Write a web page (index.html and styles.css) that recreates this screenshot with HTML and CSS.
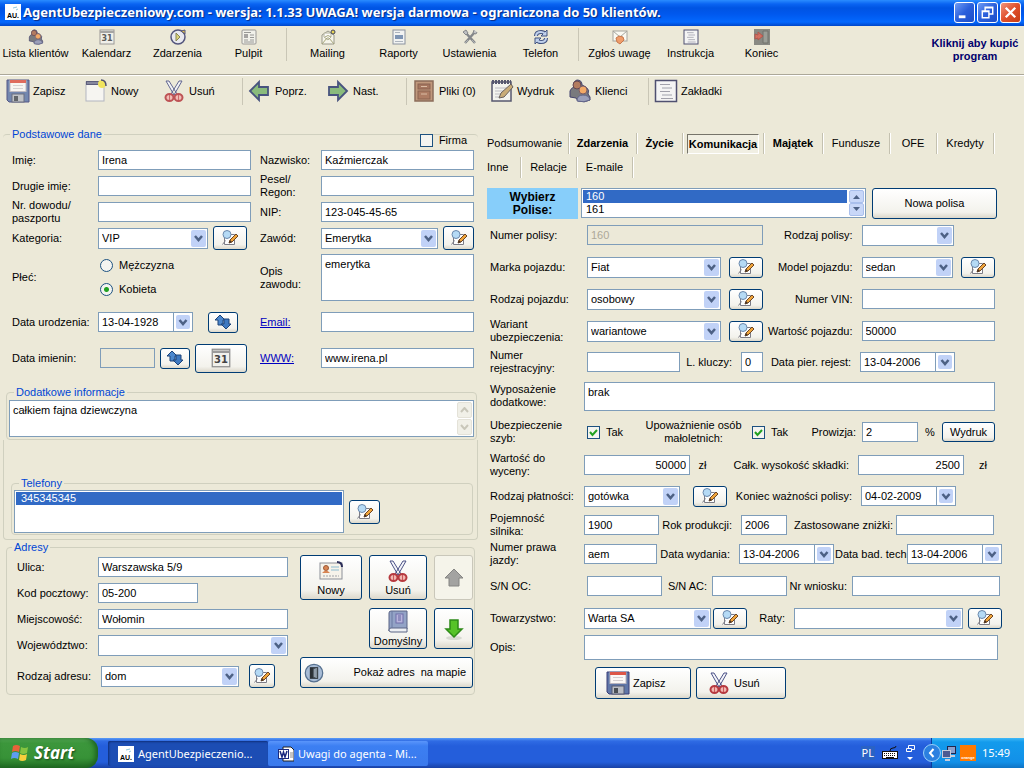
FILE: index.html
```
<!DOCTYPE html>
<html lang="pl">
<head>
    <meta charset="UTF-8">
    <meta name="viewport" content="width=device-width, initial-scale=1.0">
    <title>AgentUbezpieczeniowy.com</title>
    <link rel="stylesheet" href="styles.css">
</head>
<body>

    <!-- icon set -->
    <svg class="sprite" aria-hidden="true">
        <symbol id="i-people" viewBox="0 0 24 24">
            <path d="M2 18V12q1-3 4-4Q5 2 9 1q5 0 5 5l4 2q4 3 2 7l2 3v3q-5 3-12 1l-2-3z" fill="#66676f" stroke="#27275c"/>
            <circle cx="9" cy="6" r="4" fill="#a9684c" stroke="#4b2b3c"/>
            <circle cx="15" cy="11" r="4" fill="#f5a054" stroke="#6b4550"/>
            <path d="M9 22q0-6 6-6t7 5q-6 3-13 1z" fill="#8d93b4" stroke="#4a4e7c"/>
        </symbol>
        <symbol id="i-calendar" viewBox="0 0 16 16">
            <rect x="1" y="1" width="14" height="14" fill="#f1f1ec" stroke="#8c8c8c"/>
            <path d="M1 3h14" stroke="#9a9a9a" stroke-width="2"/>
            <text x="8" y="12" text-anchor="middle" class="cal-num">31</text>
        </symbol>
        <symbol id="i-clock" viewBox="0 0 16 16">
            <circle cx="8" cy="8" r="7" fill="#e9eaf4" stroke="#3a3d6e" stroke-width="1.5"/>
            <path d="M6 4l4 4-4 4z" fill="#d8cf6a" stroke="#77763c"/>
            <path d="M11 2l4-1v4z" fill="#e0b932" stroke="#3a3d6e"/>
        </symbol>
        <symbol id="i-news" viewBox="0 0 16 16">
            <rect x="1" y="1" width="14" height="14" rx="1" fill="#f3f3ee" stroke="#8b8b8b"/>
            <rect x="3" y="5" width="4" height="4" fill="#999"/>
            <path d="M3 3.500h7M9 6h4M9 8.500h4M3 11h4M9 11h4M3 13h10" stroke="#8a8a8a"/>
        </symbol>
        <symbol id="i-mail" viewBox="0 0 16 16">
            <path d="M2 6l6-4 6 4v9H2z" fill="#f8f8ee" stroke="#8a8a7c"/>
            <path d="M4 4h7v4l-3 3-4-3z" fill="#fff" stroke="#a8a890"/>
            <path d="M2 15l5-6h2l5 6M5 8q3-3 6 0" fill="none" stroke="#9b9b6a"/>
            <circle cx="13" cy="3" r="2" fill="#e7d13c" stroke="#222648"/>
        </symbol>
        <symbol id="i-report" viewBox="0 0 16 16">
            <rect x="2" y="1" width="12" height="14" fill="#f4f5f7" stroke="#7b8496"/>
            <path d="M4 3.500h5M4 12.500h8" stroke="#a3abba"/>
            <rect x="4" y="6" width="8" height="4" fill="#6c87ae"/>
        </symbol>
        <symbol id="i-tools" viewBox="0 0 16 16">
            <path d="M3 3l10 11M13 3L3 14" stroke="#73777d" stroke-width="2.500"/>
            <path d="M1 3l3-2 2 3-2 2zM12 1l-1 3 3 1 1-2" fill="#b8bbc0" stroke="#73777d"/>
            <path d="M3 14l3-3M13 14l-3-3" stroke="#a6a9ae" stroke-width="1"/>
        </symbol>
        <symbol id="i-sync" viewBox="0 0 16 16">
            <path d="M3 7q0-4 5-4 3 0 4 2M13 9q0 4-5 4-3 0-4-2" fill="none" stroke="#23376f" stroke-width="4"/>
            <path d="M14 1v6H8zM2 15V9h6z" fill="#b9cdf0" stroke="#23376f"/>
            <path d="M3 7q0-4 5-4 3 0 4 2M13 9q0 4-5 4-3 0-4-2" fill="none" stroke="#b9cdf0" stroke-width="2"/>
        </symbol>
        <symbol id="i-feedback" viewBox="0 0 16 16">
            <rect x="1" y="2" width="14" height="10" fill="#fdfcf6" stroke="#9a9a94"/>
            <path d="M1 2l7 6 7-6" fill="none" stroke="#9a9a94"/>
            <path d="M4 9l3-2 4 1 1 3-4 4-3-2z" fill="#f09058" stroke="#c06534"/>
        </symbol>
        <symbol id="i-doc" viewBox="0 0 24 24">
            <rect x="1.500" y="1.500" width="21" height="21" fill="#f6f6fa" stroke="#34365f" stroke-width="1.500"/>
            <path d="M6 5.500h10M8 9h10M6 12.500h10M8 16h10M7 19.500h12" stroke="#9495a4" stroke-width="1.200"/>
        </symbol>
        <symbol id="i-exit" viewBox="0 0 16 16">
            <rect width="16" height="16" fill="#777975"/>
            <path d="M9 2h5v12H9z" fill="#8e918c" stroke="#5c5e5b"/>
            <path d="M1 5l3 1V3l5 4-5 4V9L1 10z" fill="#cf5a4c" stroke="#a63f36"/>
        </symbol>
        <symbol id="i-floppy" viewBox="0 0 24 24">
            <path d="M1 1h22v22H3l-2-2z" fill="#5f76a8" stroke="#3a3f78"/>
            <rect x="4" y="1.500" width="16" height="11" fill="#fbf8f6" stroke="#b9b4be"/>
            <rect x="4" y="1" width="16" height="3" fill="#dd5648"/>
            <path d="M7 6.500h10M7 9.500h10" stroke="#d3ced0"/>
            <rect x="6" y="15" width="12" height="8" fill="#b9bcc4" stroke="#545870"/>
            <rect x="8" y="17" width="4" height="5" fill="#4a4f56"/>
        </symbol>
        <symbol id="i-new" viewBox="0 0 24 24">
            <rect x="2" y="3" width="18" height="19" fill="#f8f8f6" stroke="#a9adbd"/>
            <rect x="2" y="2" width="18" height="4" fill="#46486c"/>
            <path d="M3 4h16" stroke="#a3a6bd"/>
            <circle cx="18" cy="5" r="4" fill="#f3e44a"/>
            <path d="M17 1q5 0 5 6" fill="none" stroke="#34365f" stroke-width="1.500"/>
        </symbol>
        <symbol id="i-scissors" viewBox="0 0 24 24">
            <path d="M4 2l3 0 8 13-3 1zM20 2l-3 0L9 15l3 1z" fill="#f4f5fa" stroke="#4b5186"/>
            <ellipse cx="7.500" cy="18.500" rx="4" ry="3.500" fill="#f2b6b0" stroke="#b6393f" stroke-width="2"/>
            <ellipse cx="16.500" cy="18.500" rx="4" ry="3.500" fill="#f2b6b0" stroke="#b6393f" stroke-width="2"/>
            <path d="M7.500 16v5M16.500 16v5" stroke="#c9565a"/>
        </symbol>
        <symbol id="i-left" viewBox="0 0 24 24">
            <path d="M2 12l9-9v5h9v8h-9v5z" fill="#79b46c" stroke="#2c3a70" stroke-width="1.800"/>
        </symbol>
        <symbol id="i-right" viewBox="0 0 24 24">
            <path d="M21 12l-9-9v5H3v8h9v5z" fill="#79b46c" stroke="#2c3a70" stroke-width="1.800"/>
        </symbol>
        <symbol id="i-files" viewBox="0 0 24 24">
            <rect x="3" y="2" width="18" height="20" fill="#b98a6c" stroke="#7b5744" stroke-width="1.500"/>
            <rect x="6" y="5" width="12" height="5" fill="#99624b" stroke="#7b4c3a"/>
            <rect x="6" y="12" width="12" height="8" fill="#a46b50" stroke="#7b4c3a"/>
            <path d="M9 7.500h6M9 15h6" stroke="#d9b59b"/>
        </symbol>
        <symbol id="i-notepad" viewBox="0 0 24 24">
            <rect x="2" y="3" width="19" height="19" fill="#f5f5f3" stroke="#3c3e5c" stroke-width="1.500"/>
            <path d="M2 3h19" stroke="#3c3e5c" stroke-width="4" stroke-dasharray="2 1"/>
            <path d="M5 9h12M5 12h9M5 15h6M5 18h5" stroke="#b4b5bd"/>
            <path d="M9 19l2-5 10-9 2 3-9 10z" fill="#c3a268" stroke="#524a48"/>
        </symbol>
        <symbol id="i-edit" viewBox="0 0 16 16">
            <path d="M2.500 4.500h10v10h-10z" fill="#fdfdfd" stroke="#7c7c86"/>
            <path d="M0.500 14.500l3-4" stroke="#7c7c86"/>
            <circle cx="5" cy="4.500" r="4" fill="#b5daf5" stroke="#6b88ac"/>
            <path d="M7 13l1-3 6-6 2 2-6 6z" fill="#f0a53b" stroke="#6c4524"/>
            <path d="M7 13l1-3 2 2z" fill="#463528"/>
        </symbol>
        <symbol id="i-swap" viewBox="0 0 16 16">
            <path d="M5 1l5 5H8v5H3V6H0z" fill="#4c87cd" stroke="#1d4379"/>
            <path d="M11 15l5-5h-2V5H9v5H6z" fill="#3f79c1" stroke="#1d4379"/>
        </symbol>
        <symbol id="i-card" viewBox="0 0 24 20">
            <rect x="1" y="2" width="22" height="16" fill="#f6f3ea" stroke="#8c8f98"/>
            <circle cx="7" cy="7" r="2.500" fill="#d88552" stroke="#9a5636"/>
            <path d="M3 12q4-5 8 0z" fill="#d88552"/>
            <path d="M12 6h8M12 9h8" stroke="#8bbbd0"/>
            <path d="M4 15h16" stroke="#9fa2a8" stroke-dasharray="2 1"/>
            <path d="M18 1q5 0 5 5" fill="none" stroke="#2b2d58" stroke-width="2"/>
        </symbol>
        <symbol id="i-book" viewBox="0 0 24 24">
            <path d="M3 3q0-2 2-2h16v18H5q-2 0-2 2z" fill="#93a3c6" stroke="#5a6485"/>
            <path d="M3 20q0-2 2-2h16v4H5q-2 0-2-2z" fill="#eef0f4" stroke="#5a6485"/>
            <path d="M6 1v17" stroke="#6a7aa2"/>
            <rect x="10" y="4" width="7" height="9" fill="#b8b4dc" stroke="#6f6fa8"/>
            <path d="M12 6h3M12 8h3M12 10h3" stroke="#6565a0"/>
        </symbol>
        <symbol id="i-door" viewBox="0 0 24 24">
            <circle cx="12" cy="12" r="10.500" fill="#a8bcd6" stroke="#56708f" stroke-width="1.500"/>
            <rect x="7" y="5" width="10" height="14" fill="#2b3036"/>
            <path d="M11 7l5-2v14l-5-2z" fill="#8f9ba8" stroke="#394249"/>
        </symbol>
        <symbol id="i-up" viewBox="0 0 24 24">
            <path d="M12 3l9 9h-4v8H7v-8H3z" fill="#a3a3a1" stroke="#858583"/>
        </symbol>
        <symbol id="i-down" viewBox="0 0 24 24">
            <ellipse cx="12" cy="21" rx="8" ry="2" fill="#d8dad2"/>
            <path d="M12 20l8-8h-4V3H8v9H4z" fill="#56c328" stroke="#2e8b18" stroke-width="1.500"/>
        </symbol>
        <symbol id="i-au" viewBox="0 0 16 16">
            <rect width="16" height="16" fill="#fff"/>
            <path d="M8 4l4-1M11 6l2-1" stroke="#8fc7dd"/>
            <text x="8" y="14" text-anchor="middle" class="au-text">AU.</text>
        </symbol>
        <symbol id="i-flag" viewBox="0 0 20 20">
            <path d="M3 3q3-2 7 0l-1 6q-4-2-7 0z" fill="#e8623a"/>
            <path d="M11 4q4 2 7 0l-1 6q-4 2-7 0z" fill="#85c441"/>
            <path d="M2 10q3-2 7 0l-1 6q-4-2-7 0z" fill="#5d9df0"/>
            <path d="M10 11q4 2 7 0l-1 6q-4 2-7 0z" fill="#f7cf3c"/>
        </symbol>
        <symbol id="i-word" viewBox="0 0 16 16">
            <path d="M5 1h8l3 3v11H5z" fill="#fff" stroke="#222"/>
            <rect x="0.500" y="3.500" width="10" height="9" fill="#fff" stroke="#1a2a80"/>
            <path d="M2 5l2 6 1.500-5L7 11l2-6" fill="none" stroke="#1a2a80" stroke-width="1.500"/>
            <path d="M12 7h3M12 9h3M12 11h3" stroke="#888"/>
        </symbol>
        <symbol id="i-keyboard" viewBox="0 0 16 16">
            <path d="M8 6q0-3 3-3t3-2" fill="none" stroke="#111"/>
            <rect x="0.500" y="6.500" width="15" height="7" fill="#fff" stroke="#111"/>
            <path d="M2 8.500h12M2 10.500h12" stroke="#111" stroke-dasharray="1 1"/>
            <path d="M4 12.500h8" stroke="#111"/>
        </symbol>
        <symbol id="i-net" viewBox="0 0 16 16">
            <rect x="6.500" y="1.500" width="8" height="7" fill="#8ba0cc" stroke="#20254c"/>
            <path d="M9 11h5M4 15h5" stroke="#c9cddb" stroke-width="2"/>
            <rect x="1.500" y="5.500" width="8" height="7" fill="#4d5a92" stroke="#c9cddb"/>
        </symbol>
    </svg>

    <header class="titlebar">
        <svg class="ico16"><use href="#i-au"/></svg>
        <h1>AgentUbezpieczeniowy.com - wersja: 1.1.33 UWAGA! wersja darmowa - ograniczona do 50 klientów.</h1>
        <button class="win-btn" aria-label="Minimalizuj"><svg viewBox="0 0 20 20"><path d="M4 14.500h7" stroke="#fff" stroke-width="3"/></svg></button>
        <button class="win-btn" aria-label="Przywróć"><svg viewBox="0 0 20 20"><path d="M7.500 8V4.500h8v7H12M7 5h9M4.500 8.500h7v7h-7zM4 9h8" fill="none" stroke="#fff" stroke-width="1.500"/></svg></button>
        <button class="win-btn close" aria-label="Zamknij"><svg viewBox="0 0 20 20"><path d="M5 5l10 10M15 5L5 15" stroke="#fff" stroke-width="2.500"/></svg></button>
    </header>

    <nav class="menu">
        <button><svg class="ico16"><use href="#i-people"/></svg>Lista klientów</button>
        <button><svg class="ico16"><use href="#i-calendar"/></svg>Kalendarz</button>
        <button><svg class="ico16"><use href="#i-clock"/></svg>Zdarzenia</button>
        <button><svg class="ico16"><use href="#i-news"/></svg>Pulpit</button>
        <span class="sep"></span>
        <button><svg class="ico16"><use href="#i-mail"/></svg>Mailing</button>
        <button><svg class="ico16"><use href="#i-report"/></svg>Raporty</button>
        <button><svg class="ico16"><use href="#i-tools"/></svg>Ustawienia</button>
        <button><svg class="ico16"><use href="#i-sync"/></svg>Telefon</button>
        <span class="sep"></span>
        <button><svg class="ico16"><use href="#i-feedback"/></svg>Zgłoś uwagę</button>
        <button><svg class="ico16"><use href="#i-doc"/></svg>Instrukcja</button>
        <button><svg class="ico16"><use href="#i-exit"/></svg>Koniec</button>
        <a class="buy" href="#">Kliknij aby kupić program</a>
    </nav>

    <nav class="tools">
        <button><svg class="ico24"><use href="#i-floppy"/></svg>Zapisz</button>
        <button><svg class="ico24"><use href="#i-new"/></svg>Nowy</button>
        <button><svg class="ico24"><use href="#i-scissors"/></svg>Usuń</button>
        <span class="sep"></span>
        <button><svg class="ico24"><use href="#i-left"/></svg>Poprz.</button>
        <button><svg class="ico24"><use href="#i-right"/></svg>Nast.</button>
        <span class="sep"></span>
        <button><svg class="ico24"><use href="#i-files"/></svg>Pliki (0)</button>
        <button><svg class="ico24"><use href="#i-notepad"/></svg>Wydruk</button>
        <button><svg class="ico24"><use href="#i-people"/></svg>Klienci</button>
        <span class="sep"></span>
        <button><svg class="ico24"><use href="#i-doc"/></svg>Zakładki</button>
    </nav>

    <main>
        <section class="client">
            <fieldset class="basic">
                <legend>Podstawowe dane</legend>
                <div class="company"><label><input type="checkbox"> Firma</label></div>
                <div class="basic-grid">
                    <label for="imie">Imię:</label>
                    <input type="text" id="imie" value="Irena">
                    <label class="second-col" for="nazwisko">Nazwisko:</label>
                    <input type="text" id="nazwisko" value="Kaźmierczak">

                    <label for="imie2">Drugie imię:</label>
                    <input type="text" id="imie2">
                    <label class="second-col" for="pesel">Pesel/<br>Regon:</label>
                    <input type="text" id="pesel">

                    <label for="dowod">Nr. dowodu/<br>paszportu</label>
                    <input type="text" id="dowod">
                    <label class="second-col" for="nip">NIP:</label>
                    <input type="text" id="nip" value="123-045-45-65">

                    <label for="kategoria">Kategoria:</label>
                    <div class="cell category">
                        <select id="kategoria"><option>VIP</option></select>
                        <button class="btn pick wide" aria-label="Edytuj kategorie"><svg class="ico16"><use href="#i-edit"/></svg></button>
                    </div>
                    <label class="second-col" for="zawod">Zawód:</label>
                    <div class="cell">
                        <select id="zawod"><option>Emerytka</option></select>
                        <button class="btn pick" aria-label="Edytuj zawody"><svg class="ico16"><use href="#i-edit"/></svg></button>
                    </div>

                    <span class="caption">Płeć:</span>
                    <div class="radios">
                        <label><input type="radio" name="plec"> Mężczyzna</label>
                        <label><input type="radio" name="plec" checked> Kobieta</label>
                    </div>
                    <label class="second-col" for="opis-zawodu">Opis<br>zawodu:</label>
                    <textarea id="opis-zawodu">emerytka</textarea>

                    <label for="urodzenia">Data urodzenia:</label>
                    <div class="cell">
                        <input type="text" class="date" id="urodzenia" value="13-04-1928">
                        <button class="btn swap far" aria-label="Przelicz"><svg class="ico16"><use href="#i-swap"/></svg></button>
                    </div>
                    <label class="second-col" for="email"><a href="#">Email:</a></label>
                    <input type="text" id="email">

                    <label for="imienin">Data imienin:</label>
                    <div class="cell nameday">
                        <input type="text" id="imienin" disabled>
                        <button class="btn swap" aria-label="Przelicz"><svg class="ico16"><use href="#i-swap"/></svg></button>
                        <button class="btn cal" aria-label="Kalendarz imienin"><svg class="ico20"><use href="#i-calendar"/></svg></button>
                    </div>
                    <label class="second-col" for="www"><a href="#">WWW:</a></label>
                    <input type="text" id="www" value="www.irena.pl">
                </div>
            </fieldset>

            <fieldset class="extra">
                <legend><label for="info">Dodatkowe informacje</label></legend>
                <div class="scrollbox">
                    <textarea id="info">całkiem fajna dziewczyna</textarea>
                    <div class="scroll off"><i class="up"></i><i class="down"></i></div>
                </div>
            </fieldset>

            <div class="phones-wrap">
                <fieldset class="phones">
                    <legend>Telefony</legend>
                    <div class="cell">
                        <select class="list" size="3" aria-label="Telefony"><option selected>345345345</option></select>
                        <button class="btn pick" aria-label="Edytuj telefony"><svg class="ico16"><use href="#i-edit"/></svg></button>
                    </div>
                </fieldset>
            </div>

            <fieldset class="address">
                <legend>Adresy</legend>
                <div class="address-form">
                    <label for="ulica">Ulica:</label>
                    <input type="text" id="ulica" value="Warszawska 5/9">
                    <label for="kod">Kod pocztowy:</label>
                    <input type="text" class="short" id="kod" value="05-200">
                    <label for="miejscowosc">Miejscowość:</label>
                    <input type="text" id="miejscowosc" value="Wołomin">
                    <label for="woj">Województwo:</label>
                    <select id="woj"><option></option></select>
                    <label for="rodzaj-adresu">Rodzaj adresu:</label>
                    <div class="cell kind">
                        <select id="rodzaj-adresu"><option>dom</option></select>
                        <button class="btn pick" aria-label="Edytuj rodzaje"><svg class="ico16"><use href="#i-edit"/></svg></button>
                    </div>
                </div>
                <div class="address-actions">
                    <button class="btn tall"><svg class="ico24"><use href="#i-card"/></svg>Nowy</button>
                    <button class="btn tall"><svg class="ico24"><use href="#i-scissors"/></svg>Usuń</button>
                    <button class="btn" disabled aria-label="W górę"><svg class="ico24"><use href="#i-up"/></svg></button>
                    <span></span>
                    <button class="btn tall"><svg class="ico24"><use href="#i-book"/></svg>Domyślny</button>
                    <button class="btn" aria-label="W dół"><svg class="ico24"><use href="#i-down"/></svg></button>
                    <button class="btn map"><svg class="ico20"><use href="#i-door"/></svg>Pokaż adres&nbsp; na mapie</button>
                </div>
            </fieldset>
        </section>

        <section class="policy">
            <div class="tabs">
                <button>Podsumowanie</button>
                <button class="filled">Zdarzenia</button>
                <button class="filled">Życie</button>
                <button class="filled active"><span>Komunikacja</span></button>
                <button class="filled">Majątek</button>
                <button>Fundusze</button>
                <button>OFE</button>
                <button>Kredyty</button>
            </div>
            <div class="tabs second">
                <button>Inne</button>
                <button>Relacje</button>
                <button>E-maile</button>
            </div>

            <div class="chooser">
                <label for="polisa">Wybierz<br>Polise:</label>
                <div class="scrollbox">
                    <select class="list" id="polisa" size="2"><option selected>160</option><option>161</option></select>
                    <div class="scroll"><i class="up"></i><i class="down"></i></div>
                </div>
                <button class="btn">Nowa polisa</button>
            </div>

            <div class="row vehicle">
                <label for="nr-polisy">Numer polisy:</label>
                <input type="text" class="span2" id="nr-polisy" value="160" disabled>
                <label class="r" for="rodzaj-polisy">Rodzaj polisy:</label>
                <select class="kind-select" id="rodzaj-polisy"><option></option></select>
            </div>
            <div class="row vehicle">
                <label for="marka">Marka pojazdu:</label>
                <select id="marka"><option>Fiat</option></select>
                <button class="btn pick wide" aria-label="Edytuj marki"><svg class="ico16"><use href="#i-edit"/></svg></button>
                <label class="r" for="model">Model pojazdu:</label>
                <div class="cell model">
                    <select id="model"><option>sedan</option></select>
                    <button class="btn pick wide" aria-label="Edytuj modele"><svg class="ico16"><use href="#i-edit"/></svg></button>
                </div>
            </div>
            <div class="row vehicle">
                <label for="rodzaj">Rodzaj pojazdu:</label>
                <select id="rodzaj"><option>osobowy</option></select>
                <button class="btn pick wide" aria-label="Edytuj rodzaje"><svg class="ico16"><use href="#i-edit"/></svg></button>
                <label class="r" for="vin">Numer VIN:</label>
                <input type="text" id="vin">
            </div>
            <div class="row vehicle">
                <label for="wariant">Wariant<br>ubezpieczenia:</label>
                <select id="wariant"><option>wariantowe</option></select>
                <button class="btn pick wide" aria-label="Edytuj warianty"><svg class="ico16"><use href="#i-edit"/></svg></button>
                <label class="r" for="wartosc">Wartość pojazdu:</label>
                <input type="text" id="wartosc" value="50000">
            </div>
            <div class="row plate">
                <label for="rejestr">Numer<br>rejestracyjny:</label>
                <input type="text" id="rejestr">
                <label class="r" for="klucze">L. kluczy:</label>
                <input type="text" id="klucze" value="0">
                <label class="r" for="pierwsza">Data pier. rejest:</label>
                <input type="text" class="date" id="pierwsza" value="13-04-2006">
            </div>
            <div class="row equip">
                <label for="wyposazenie">Wyposażenie<br>dodatkowe:</label>
                <textarea id="wyposazenie">brak</textarea>
            </div>
            <div class="row glass">
                <span class="caption">Ubezpieczenie<br>szyb:</span>
                <label><input type="checkbox" checked> Tak</label>
                <span class="caption mid">Upoważnienie osób<br>małoletnich:</span>
                <label><input type="checkbox" checked> Tak</label>
                <label class="r" for="prowizja">Prowizja:</label>
                <input type="text" id="prowizja" value="2">
                <span class="mid">%</span>
                <button class="btn">Wydruk</button>
            </div>
            <div class="row price">
                <label for="wycena">Wartość do<br>wyceny:</label>
                <input type="text" class="num" id="wycena" value="50000">
                <span class="mid">zł</span>
                <label class="r" for="skladka">Całk. wysokość składki:</label>
                <input type="text" class="num" id="skladka" value="2500">
                <span class="mid">zł</span>
            </div>
            <div class="row payment">
                <label for="platnosc">Rodzaj płatności:</label>
                <select id="platnosc"><option>gotówka</option></select>
                <button class="btn pick wide" aria-label="Edytuj płatności"><svg class="ico16"><use href="#i-edit"/></svg></button>
                <label class="r" for="koniec">Koniec ważności polisy:</label>
                <input type="text" class="date" id="koniec" value="04-02-2009">
            </div>
            <div class="row engine">
                <label for="pojemnosc">Pojemność<br>silnika:</label>
                <input type="text" id="pojemnosc" value="1900">
                <label class="r" for="rok">Rok produkcji:</label>
                <input type="text" id="rok" value="2006">
                <label class="r" for="znizki">Zastosowane zniżki:</label>
                <input type="text" id="znizki">
            </div>
            <div class="row licence">
                <label for="prawo">Numer prawa<br>jazdy:</label>
                <input type="text" id="prawo" value="aem">
                <label class="r" for="wydania">Data wydania:</label>
                <input type="text" class="date" id="wydania" value="13-04-2006">
                <label class="tight" for="badanie">Data bad. tech</label>
                <input type="text" class="date" id="badanie" value="13-04-2006">
            </div>
            <div class="row serial">
                <label for="oc">S/N OC:</label>
                <input type="text" id="oc">
                <label class="r" for="ac">S/N AC:</label>
                <input type="text" id="ac">
                <label class="r" for="wniosek">Nr wniosku:</label>
                <input type="text" id="wniosek">
            </div>
            <div class="row company-row">
                <label for="towarzystwo">Towarzystwo:</label>
                <select id="towarzystwo"><option>Warta SA</option></select>
                <button class="btn pick wide" aria-label="Edytuj towarzystwa"><svg class="ico16"><use href="#i-edit"/></svg></button>
                <label class="r" for="raty">Raty:</label>
                <select id="raty"><option></option></select>
                <button class="btn pick wide" aria-label="Edytuj raty"><svg class="ico16"><use href="#i-edit"/></svg></button>
            </div>
            <div class="row notes">
                <label for="opis">Opis:</label>
                <input type="text" id="opis">
            </div>

            <div class="actions">
                <button class="btn"><svg class="ico24"><use href="#i-floppy"/></svg>Zapisz</button>
                <button class="btn"><svg class="ico24"><use href="#i-scissors"/></svg>Usuń</button>
            </div>
        </section>
    </main>

    <footer class="taskbar">
        <button class="start"><svg class="ico20"><use href="#i-flag"/></svg>Start</button>
        <button class="task current"><svg class="ico16"><use href="#i-au"/></svg>AgentUbezpieczenio...</button>
        <button class="task"><svg class="ico16"><use href="#i-word"/></svg>Uwagi do agenta - Mi...</button>
        <div class="lang">
            <span class="pl">PL</span>
            <svg class="ico16"><use href="#i-keyboard"/></svg>
            <svg class="restore" viewBox="0 0 10 18"><path d="M3.500 4V1.500h6v4H7M1.500 4.500h5v3h-5z" fill="none" stroke="#fff"/><path d="M2 13h6l-3 3z" fill="#fff"/></svg>
        </div>
        <div class="tray">
            <button class="expand" aria-label="Pokaż ukryte ikony"><svg viewBox="0 0 16 16"><path d="M9.500 4L6 8l3.500 4" fill="none" stroke="#fff" stroke-width="2"/></svg></button>
            <svg class="ico16"><use href="#i-net"/></svg>
            <span class="orange">orange</span>
            <time>15:49</time>
        </div>
    </footer>

</body>
</html>
```
FILE: styles.css
```
* {
    box-sizing: border-box;
}
body {
    margin: 0;
    min-height: 100vh;
    display: flex;
    flex-direction: column;
    background: #ece9d8;
    color: #000;
    font: 11px/13px "Liberation Sans", Arial, sans-serif;
}
button, input, select, textarea {
    font: inherit;
    color: inherit;
    margin: 0;
    min-width: 0;
}
button {
    background: none;
    border: none;
    padding: 0;
    white-space: nowrap;
}
svg {
    flex: none;
    display: block;
}
a {
    color: #0000c0;
}
.sprite {
    position: absolute;
    width: 0;
    height: 0;
}
.ico16 {
    width: 16px;
    height: 16px;
}
.ico20 {
    width: 20px;
    height: 20px;
}
.ico24 {
    width: 24px;
    height: 24px;
}
.cal-num {
    font: bold 8px "DejaVu Sans", sans-serif;
    fill: #444;
}
.au-text {
    font: bold 7px "Liberation Sans", sans-serif;
    fill: #000;
}

/* title bar */
.titlebar {
    height: 26px;
    padding: 0 3px 2px 5px;
    display: flex;
    align-items: center;
    gap: 2px;
    background: linear-gradient(#2a8cff 0, #0a64f2 4px, #0054e3 8px, #0058ee 14px, #0368fe 22px, #0046c8 26px);
}
.titlebar h1 {
    flex: 1;
    margin: 0;
    font: bold 13px/20px "Noto Sans", sans-serif;
    color: #fff;
    text-shadow: 1px 1px 1px #0a2a80;
    white-space: nowrap;
}
.win-btn {
    width: 21px;
    height: 21px;
    border: 1px solid #fff;
    border-radius: 3px;
    background: linear-gradient(135deg, #6f9cf5, #2a5fdb 50%, #1c4dc8);
}
.win-btn.close {
    background: linear-gradient(135deg, #f0947c, #e0502c 50%, #c73c16);
}

/* toolbars */
.menu {
    height: 49px;
    display: flex;
    border-bottom: 1px solid #aca899;
}
.menu button {
    width: 71px;
    height: 36px;
    padding-top: 3px;
    display: flex;
    flex-direction: column;
    align-items: center;
    gap: 2px;
}
.menu button svg {
    opacity: 0.85;
}
.sep {
    width: 8px;
    background: linear-gradient(#c9c6b6, #c9c6b6) 2px 0 / 1px 100% no-repeat;
}
.menu .sep {
    height: 33px;
    margin-top: 2px;
}
.buy {
    width: 94px;
    margin: 11px 2px 0 auto;
    text-align: center;
    font-weight: bold;
    color: #00006c;
    text-decoration: none;
}
.tools {
    height: 31px;
    padding-left: 6px;
    display: flex;
    align-items: center;
    border-top: 1px solid #fff;
}
.tools button {
    width: 78px;
    display: flex;
    align-items: center;
    gap: 3px;
}
.tools .sep {
    height: 27px;
}
.tools svg {
    opacity: 0.85;
}

/* form controls */
input[type="text"], select, textarea {
    width: 100%;
    height: 20px;
    padding: 0 3px;
    border: 1px solid #7f9db9;
    border-radius: 0;
    background-color: #fff;
    outline: none;
}
textarea {
    display: block;
    padding: 3px;
    resize: none;
    overflow: hidden;
}
input[type="text"]:disabled {
    background: #ece9d8;
    color: #aca899;
}
select {
    appearance: none;
    height: 21px;
    background: #fff url('data:image/svg+xml,<svg xmlns="http://www.w3.org/2000/svg" width="15" height="17"><rect width="15" height="17" rx="2" fill="%23c1d2f7"/><path d="M4 6l3.500 4L11 6" fill="none" stroke="%234d6185" stroke-width="2.500"/></svg>') right 1px center no-repeat;
}
.date {
    background: #fff url('data:image/svg+xml,<svg xmlns="http://www.w3.org/2000/svg" width="19" height="20"><path d="M.5 0v20" stroke="%237f9db9"/><rect x="3" y="3" width="14" height="14" rx="2" fill="%23c1d2f7"/><path d="M6.500 8l3.500 4 3.500-4" fill="none" stroke="%234d6185" stroke-width="2.500"/></svg>') right center no-repeat;
}
.num {
    text-align: right;
}
input[type="checkbox"] {
    appearance: none;
    width: 13px;
    height: 13px;
    border: 1px solid #1c5180;
    background: #f4f4f0;
}
input[type="checkbox"]:checked {
    background: #f4f4f0 url('data:image/svg+xml,<svg xmlns="http://www.w3.org/2000/svg" width="11" height="11"><path d="M2 5l2.500 3L9 3" fill="none" stroke="%2321a121" stroke-width="2"/></svg>') center no-repeat;
}
input[type="radio"] {
    appearance: none;
    width: 13px;
    height: 13px;
    border: 1px solid #1c5180;
    border-radius: 50%;
    background: #f4f4f0;
}
input[type="radio"]:checked {
    background: radial-gradient(circle, #21a121 0, #21a121 2px, #f4f4f0 3px);
}
.btn {
    display: flex;
    align-items: center;
    justify-content: center;
    border: 1px solid #003c74;
    border-radius: 3px;
    background: linear-gradient(#fff, #f3f2ec 80%, #dcd8cb);
}
.btn:disabled {
    border-color: #c9c7ba;
    background: #f5f4ea;
}
.pick {
    flex: none;
    width: 31px;
    height: 24px;
}
.pick.wide {
    width: 34px;
}
.cell {
    display: flex;
    align-items: center;
    gap: 5px;
}
.scrollbox {
    display: flex;
    border: 1px solid #7f9db9;
    background: #fff;
}
.scrollbox textarea, .scrollbox select {
    border: none;
}
.scroll {
    flex: none;
    width: 17px;
    padding: 1px;
    display: flex;
    flex-direction: column;
    justify-content: space-between;
}
.scroll i {
    height: 13px;
    border: 1px solid #a9bfec;
    border-radius: 2px;
    background: #c8d7f8 url('data:image/svg+xml,<svg xmlns="http://www.w3.org/2000/svg" width="9" height="6"><path d="M1 5l3.500-4L8 5z" fill="%234d6185"/></svg>') center no-repeat;
}
.scroll .down {
    transform: rotate(180deg);
}
.scroll.off i {
    height: 16px;
    border-color: #e4e2d8;
    background: #f1f0e8 url('data:image/svg+xml,<svg xmlns="http://www.w3.org/2000/svg" width="9" height="6"><path d="M1 5l3.500-4L8 5" fill="none" stroke="%23c9c7ba" stroke-width="2"/></svg>') center no-repeat;
}
.list {
    padding: 1px;
    background: #fff;
    overflow: hidden;
}
.list option {
    height: 13px;
    min-height: 13px;
    padding: 0 3px;
    line-height: 13px;
}
.list option:checked {
    background: linear-gradient(#316ac5, #316ac5);
    -webkit-text-fill-color: #fff;
}

/* layout */
main {
    flex: 1;
    display: grid;
    grid-template-columns: 480fr 544fr;
    align-items: start;
}
fieldset {
    min-width: 0;
    margin: 0;
    padding: 0;
    border: 1px solid #d0d0bf;
    border-radius: 4px;
}
legend {
    padding: 0 2px;
    color: #0046d5;
}

/* client */
.client {
    padding: 22px 2px 0 3px;
}
.basic {
    padding: 0 4px 0 9px;
    border-width: 1px 0 0;
}
.basic legend {
    margin-left: -2px;
}
.company {
    margin-top: -7px;
    padding-right: 7px;
    display: flex;
    justify-content: flex-end;
}
.company label, .radios label, .glass label {
    display: flex;
    align-items: center;
    gap: 6px;
}
.basic-grid {
    display: grid;
    grid-template-columns: 86px 1fr 70px 1fr;
    grid-template-rows: repeat(4, 26px) 53px 36px 36px;
    align-items: center;
}
.second-col {
    padding-left: 9px;
}
.basic-grid textarea {
    height: 47px;
}
.category {
    padding-right: 4px;
}
.radios {
    display: grid;
    gap: 11px;
    padding-left: 2px;
}
.basic-grid .date {
    width: 95px;
}
.swap {
    width: 30px;
    height: 21px;
}
.swap.far {
    margin-left: 10px;
}
.nameday {
    padding: 0 4px 0 2px;
}
.nameday input {
    flex: 1;
}
.cal {
    width: 52px;
    height: 29px;
}
.extra {
    margin: 10px 1px 0 3px;
    padding: 1px 2px 2px;
}
.extra legend, .phones legend {
    margin-left: 5px;
}
.extra .scrollbox textarea {
    height: 35px;
}
.phones-wrap {
    padding: 37px 4px 4px 7px;
    border: 1px solid #d0d0bf;
    border-top: none;
    border-radius: 0 0 4px 4px;
}
.phones {
    padding: 0 2px 1px;
}
.phones .list {
    width: 330px;
    height: 43px;
}
.phones .list option {
    padding-left: 5px;
}
.address {
    display: grid;
    grid-template-columns: 1fr 173px;
    column-gap: 12px;
    margin: 1px 3px 0 3px;
    padding: 0 1px 0 10px;
}
.address legend {
    margin-left: -5px;
}
.address-form {
    display: grid;
    grid-template-columns: 81px 1fr;
    grid-template-rows: repeat(4, 26px) 36px;
    align-items: center;
}
.address .short {
    width: 100px;
}
.kind {
    gap: 10px;
    padding: 0 13px 0 3px;
}
.kind .pick {
    width: 26px;
}
.address-actions {
    display: grid;
    grid-template-columns: 62px 58px 39px;
    grid-template-rows: 45px 41px 31px;
    row-gap: 8px;
    justify-content: space-between;
    align-content: start;
    padding-top: 1px;
}
.tall {
    flex-direction: column;
    gap: 1px;
}
.map {
    grid-column: 1 / -1;
    justify-content: space-between;
    padding: 0 6px 0 3px;
}

/* policy */
.policy {
    padding: 27px 22px 0 7px;
}
.tabs {
    display: grid;
    grid-template-columns: 82px 68px 46px 81px 59px 67px 47px 57px;
    height: 21px;
}
.tabs button {
    border-right: 1px solid #c4c1b0;
    box-shadow: 1px 0 #fff;
}
.tabs button:first-child {
    text-align: left;
}
.tabs .filled {
    font-weight: bold;
}
.tabs .active span {
    display: block;
    margin: 0 4px;
    border: 1px solid;
    border-color: #76746a #fff #fff #76746a;
    height: 20px;
    line-height: 18px;
    background: #f1efe3;
}
.tabs.second {
    margin: 3px 0 10px;
    grid-template-columns: 34px 56px 56px;
}
.chooser {
    display: grid;
    grid-template-columns: 91px 1fr 125px;
    padding-right: 5px;
    height: 31px;
}
.chooser label {
    background: #87cefa;
    text-align: center;
    font-weight: bold;
    font-size: 12px;
    padding-top: 3px;
}
.chooser .scrollbox {
    margin: 0 6px 1px 3px;
}
.chooser .list {
    height: 28px;
}
.row {
    display: grid;
    align-items: center;
    height: 30px;
}
.row > :first-child {
    padding-left: 3px;
}
.row .r {
    text-align: right;
    padding-right: 9px;
    white-space: nowrap;
}
.row .pick {
    height: 21px;
    justify-self: end;
}
.mid {
    text-align: center;
}
.vehicle {
    height: 32px;
    grid-template-columns: 100px 1fr 42px 99px 1fr;
    padding-right: 7px;
}
.span2 {
    grid-column: span 2;
}
.kind-select {
    width: 92px;
}
.model {
    gap: 8px;
}
.plate {
    grid-template-columns: 100px 1fr 61px 22px 97px 95px;
    padding-right: 47px;
}
.equip {
    height: 38px;
    grid-template-columns: 97px 1fr;
    padding-right: 7px;
}
.equip textarea {
    height: 29px;
}
.glass {
    height: 34px;
    grid-template-columns: 100px 48px 1fr 46px 64px 56px 24px 53px;
    padding-right: 7px;
}
.glass .r {
    display: block;
    padding-right: 6px;
}
.glass .btn {
    height: 20px;
}
.price {
    height: 32px;
    grid-template-columns: 97px 1fr 25px 143px 1fr 38px;
}
.payment {
    grid-template-columns: 97px 1fr 47px 134px 95px;
    padding-right: 46px;
}
.engine {
    height: 28px;
    grid-template-columns: 97px 75px 82px 46px 109px 1fr;
    padding-right: 8px;
}
.engine .r:nth-of-type(3) {
    padding-right: 3px;
}
.licence {
    grid-template-columns: 97px 1fr 82px 95px 73px 95px;
}
.tight {
    padding-left: 1px;
    white-space: nowrap;
}
.serial {
    height: 34px;
    grid-template-columns: 100px 75px 50px 75px 65px 1fr;
    padding-right: 2px;
}
.serial .r {
    padding-right: 5px;
}
.company-row {
    grid-template-columns: 97px 127px 36px 47px 1fr 39px;
}
.notes {
    height: 28px;
    grid-template-columns: 97px 1fr;
    padding-right: 4px;
}
.notes input[type="text"] {
    height: 25px;
}
.actions {
    display: flex;
    gap: 5px;
    padding: 6px 0 0 108px;
}
.actions .btn {
    width: 96px;
    height: 32px;
    padding-left: 10px;
    justify-content: flex-start;
    gap: 3px;
}
.actions .btn:last-child {
    width: 90px;
}

/* taskbar */
.taskbar {
    height: 30px;
    display: flex;
    align-items: stretch;
    background: linear-gradient(#5a9cf7 0, #2f6be4 3px, #245edb 8px, #245edb 24px, #1941a5 30px);
    color: #fff;
    font: 11px/14px "Noto Sans", sans-serif;
}
.start {
    width: 98px;
    margin-right: 10px;
    padding-left: 10px;
    display: flex;
    align-items: center;
    gap: 4px;
    border-radius: 0 12px 12px 0;
    background: linear-gradient(#5cb15c 0, #3c973c 5px, #379237 20px, #1f6b22);
    box-shadow: inset -3px 0 5px #1d6321;
    font: italic bold 17px/20px "Open Sans", sans-serif;
    text-shadow: 1px 1px 2px #174a19;
}
.task {
    width: 160px;
    margin: 3px 0 2px;
    padding-left: 10px;
    display: flex;
    align-items: center;
    gap: 4px;
    border-radius: 2px;
    background: linear-gradient(#5a95fb, #3c7ff2 5px, #3a79ec);
}
.task.current {
    background: #1c4db4;
    box-shadow: inset 1px 1px 2px #10307c;
}
.lang {
    margin-left: auto;
    padding-right: 16px;
    display: flex;
    align-items: center;
    gap: 7px;
}
.pl {
    padding: 0 1px;
    background: #2a62c4;
}
.restore {
    width: 10px;
    height: 18px;
}
.tray {
    width: 93px;
    display: flex;
    align-items: center;
    border-left: 1px solid #0a3c9c;
    background: linear-gradient(#3fb8f7 0, #139bec 4px, #1290e8 24px, #0f73c4);
}
.expand {
    width: 18px;
    height: 18px;
    margin-left: -9px;
    border: 1px solid #9ad0f8;
    border-radius: 50%;
    background: #2b80e0;
}
.tray .ico16 {
    margin: 0 3px 0 0;
}
.orange {
    width: 16px;
    height: 16px;
    background: #ff7900;
    font: bold 4px/26px "Liberation Sans", sans-serif;
    text-align: center;
}
.tray time {
    margin-left: 6px;
}
```
